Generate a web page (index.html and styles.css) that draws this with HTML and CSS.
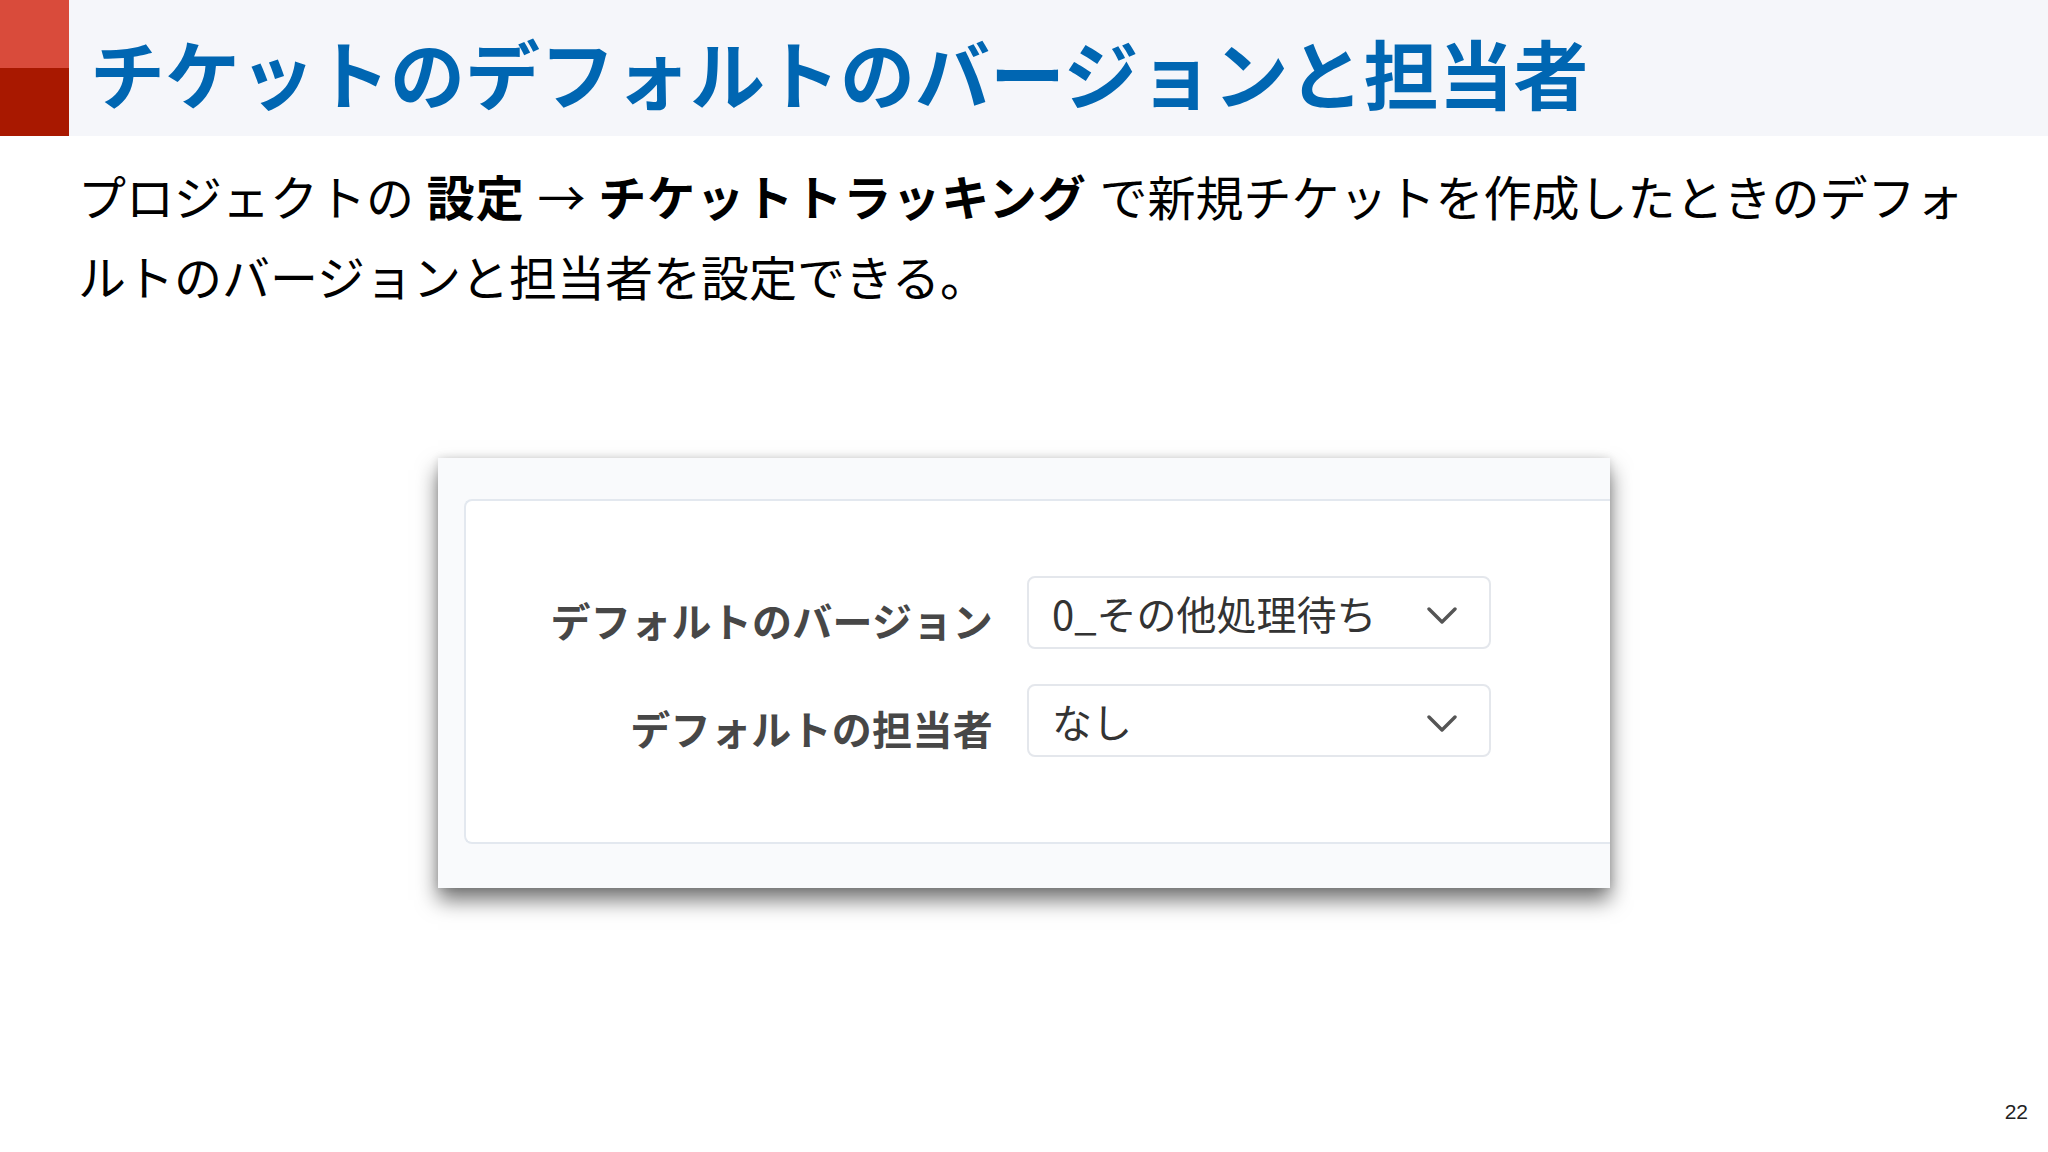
FILE: index.html
```html
<!DOCTYPE html>
<html lang="ja">
<head>
<meta charset="utf-8">
<title>チケットのデフォルトのバージョンと担当者</title>
<link rel="stylesheet" href="styles.css">
</head>
<body>
<div class="slide">
  <header class="header">
    <div class="mark"><div class="mark-top"></div><div class="mark-bottom"></div></div>
    <h1 class="title">チケットのデフォルトのバージョンと担当者</h1>
  </header>
  <p class="lead">プロジェクトの <b>設定</b> → <b>チケットトラッキング</b> で新規チケットを作成したときのデフォ<br>ルトのバージョンと担当者を設定できる。</p>
  <div class="shot">
    <div class="panel">
      <div class="form">
        <div class="label">デフォルトのバージョン</div>
        <div class="select"><span class="value">0_その他処理待ち</span><svg class="chev" width="30" height="18" viewBox="0 0 30 18"><polyline points="2,2 15,15 28,2" fill="none" stroke="#555" stroke-width="3.4" stroke-linecap="round" stroke-linejoin="round"/></svg></div>
        <div class="label">デフォルトの担当者</div>
        <div class="select"><span class="value">なし</span><svg class="chev" width="30" height="18" viewBox="0 0 30 18"><polyline points="2,2 15,15 28,2" fill="none" stroke="#555" stroke-width="3.4" stroke-linecap="round" stroke-linejoin="round"/></svg></div>
      </div>
    </div>
  </div>
  <footer class="footer">22</footer>
</div>
</body>
</html>
```
FILE: styles.css
```css
html, body {
  margin: 0;
  padding: 0;
  background: #ffffff;
}
.slide {
  width: 2048px;
  height: 1152px;
  display: flex;
  flex-direction: column;
  overflow: hidden;
  font-family: "Noto Sans CJK JP", "Noto Sans", sans-serif;
  color: #000;
}
.header {
  height: 136px;
  display: flex;
  align-items: center;
  background: #f5f6fa;
  flex: none;
}
.mark {
  width: 69px;
  height: 136px;
  display: flex;
  flex-direction: column;
  flex: none;
}
.mark-top {
  height: 68px;
  background: #d94b3b;
}
.mark-bottom {
  height: 68px;
  background: #a81800;
}
.title {
  margin: 0;
  padding: 6px 0 0 21px;
  font-size: 75px;
  line-height: 1;
  font-weight: 700;
  color: #0066b2;
  white-space: nowrap;
}
.lead {
  margin: 19px 0 0 0;
  padding: 0 40px 0 78px;
  font-size: 48px;
  line-height: 80px;
  font-weight: 400;
  word-spacing: 2px;
  white-space: nowrap;
}
.lead b {
  font-weight: 700;
  letter-spacing: 1px;
}
.shot {
  align-self: center;
  width: 1172px;
  height: 430px;
  box-sizing: border-box;
  margin-top: 143px;
  padding: 41px 0 44px 26px;
  background: #f9fafc;
  box-shadow: 0 12px 20px rgba(0, 0, 0, 0.55), 0 0 8px rgba(0, 0, 0, 0.12);
  display: flex;
  flex: none;
}
.panel {
  flex: 1;
  background: #ffffff;
  border: 2px solid #e3e8ef;
  border-right: none;
  border-radius: 8px 0 0 8px;
  padding-top: 75px;
}
.form {
  display: grid;
  grid-template-columns: 527px 464px;
  column-gap: 34px;
  row-gap: 35px;
}
.label {
  align-self: center;
  padding-top: 14px;
  text-align: right;
  font-size: 40px;
  line-height: 1.2;
  font-weight: 700;
  color: #474747;
  white-space: nowrap;
  letter-spacing: 0.3px;
}
.select {
  height: 73px;
  box-sizing: border-box;
  border: 2px solid #e4e7ec;
  border-radius: 8px;
  background: #ffffff;
  display: flex;
  align-items: center;
  justify-content: space-between;
  padding: 0 32px 0 23px;
}
.value {
  font-size: 40px;
  line-height: 1;
  color: #333333;
  white-space: nowrap;
}
.chev {
  display: block;
  margin-top: 6px;
}
.footer {
  margin-top: auto;
  padding: 0 20px 28px 0;
  text-align: right;
  font-family: "Liberation Sans", Arial, sans-serif;
  font-size: 21px;
  line-height: 24px;
  color: #222;
}
```
